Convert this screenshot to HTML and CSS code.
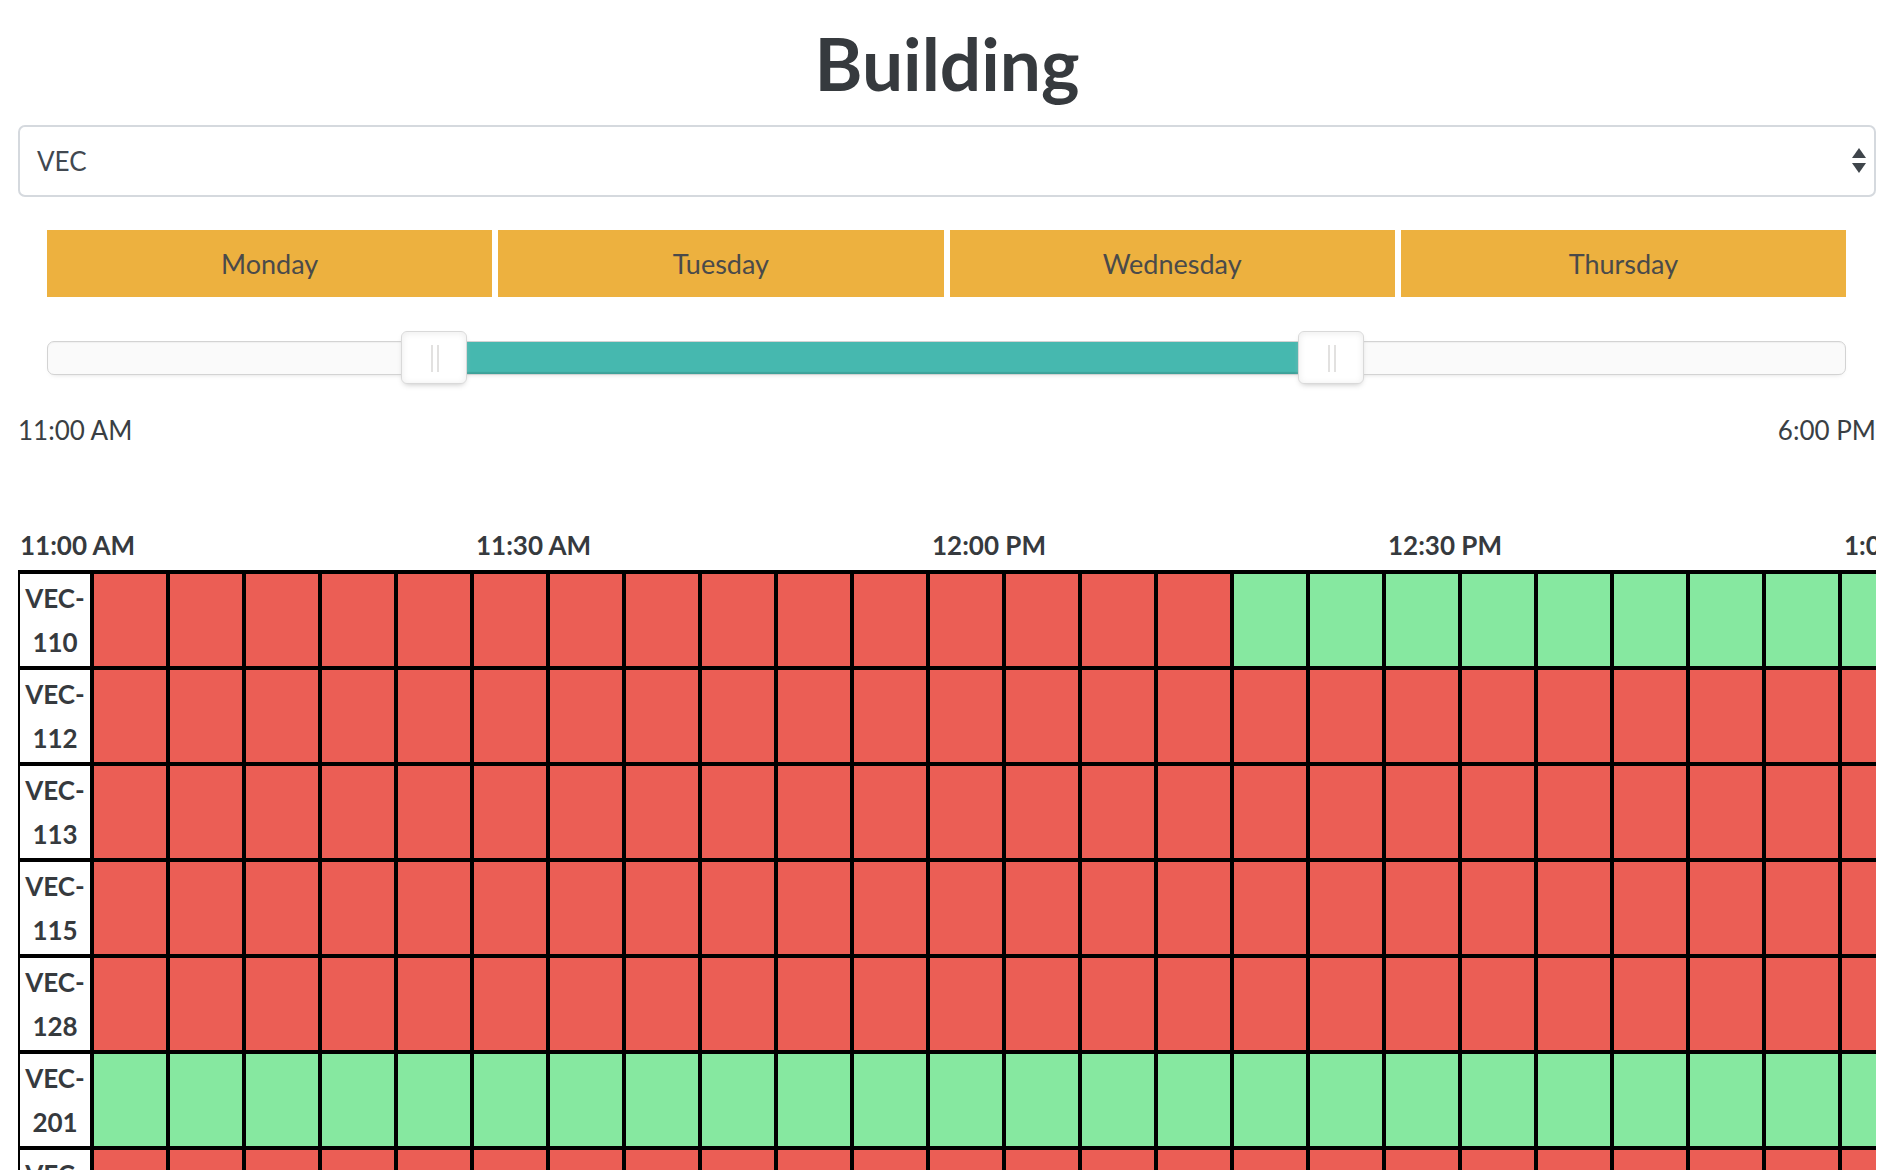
FILE: index.html
```html
<!DOCTYPE html>
<html lang="en">
<head>
<meta charset="utf-8">
<title>Building</title>
<link rel="stylesheet" href="styles.css">
</head>
<body>
<div class="page">
  <h1 class="title">Building</h1>

  <div class="select">
    <span class="select-value">VEC</span>
    <svg class="select-arrows" width="14" height="26" viewBox="0 0 14 26" aria-hidden="true">
      <polygon points="7,0 14,10 0,10" fill="#3f454b"/>
      <polygon points="0,15 14,15 7,25" fill="#3f454b"/>
    </svg>
  </div>

  <div class="controls">
    <div class="days">
      <div class="day">Monday</div>
      <div class="day">Tuesday</div>
      <div class="day">Wednesday</div>
      <div class="day">Thursday</div>
    </div>

    <div class="slider">
      <div class="connect"></div>
      <div class="handle handle-lower"></div>
      <div class="handle handle-upper"></div>
    </div>
  </div>

  <div class="range-labels">
    <span>11:00 AM</span>
    <span>6:00 PM</span>
  </div>

  <div class="schedule">
    <div class="times">
      <div class="time">11:00 AM</div>
      <div class="time">11:30 AM</div>
      <div class="time">12:00 PM</div>
      <div class="time">12:30 PM</div>
      <div class="time">1:00 PM</div>
    </div>

    <div class="grid">
      <div class="room">VEC-<br>110</div>
      <span class="r"></span><span class="r"></span><span class="r"></span><span class="r"></span><span class="r"></span><span class="r"></span><span class="r"></span><span class="r"></span><span class="r"></span><span class="r"></span><span class="r"></span><span class="r"></span><span class="r"></span><span class="r"></span><span class="r"></span><span class="g"></span><span class="g"></span><span class="g"></span><span class="g"></span><span class="g"></span><span class="g"></span><span class="g"></span><span class="g"></span><span class="g"></span>

      <div class="room">VEC-<br>112</div>
      <span class="r"></span><span class="r"></span><span class="r"></span><span class="r"></span><span class="r"></span><span class="r"></span><span class="r"></span><span class="r"></span><span class="r"></span><span class="r"></span><span class="r"></span><span class="r"></span><span class="r"></span><span class="r"></span><span class="r"></span><span class="r"></span><span class="r"></span><span class="r"></span><span class="r"></span><span class="r"></span><span class="r"></span><span class="r"></span><span class="r"></span><span class="r"></span>

      <div class="room">VEC-<br>113</div>
      <span class="r"></span><span class="r"></span><span class="r"></span><span class="r"></span><span class="r"></span><span class="r"></span><span class="r"></span><span class="r"></span><span class="r"></span><span class="r"></span><span class="r"></span><span class="r"></span><span class="r"></span><span class="r"></span><span class="r"></span><span class="r"></span><span class="r"></span><span class="r"></span><span class="r"></span><span class="r"></span><span class="r"></span><span class="r"></span><span class="r"></span><span class="r"></span>

      <div class="room">VEC-<br>115</div>
      <span class="r"></span><span class="r"></span><span class="r"></span><span class="r"></span><span class="r"></span><span class="r"></span><span class="r"></span><span class="r"></span><span class="r"></span><span class="r"></span><span class="r"></span><span class="r"></span><span class="r"></span><span class="r"></span><span class="r"></span><span class="r"></span><span class="r"></span><span class="r"></span><span class="r"></span><span class="r"></span><span class="r"></span><span class="r"></span><span class="r"></span><span class="r"></span>

      <div class="room">VEC-<br>128</div>
      <span class="r"></span><span class="r"></span><span class="r"></span><span class="r"></span><span class="r"></span><span class="r"></span><span class="r"></span><span class="r"></span><span class="r"></span><span class="r"></span><span class="r"></span><span class="r"></span><span class="r"></span><span class="r"></span><span class="r"></span><span class="r"></span><span class="r"></span><span class="r"></span><span class="r"></span><span class="r"></span><span class="r"></span><span class="r"></span><span class="r"></span><span class="r"></span>

      <div class="room">VEC-<br>201</div>
      <span class="g"></span><span class="g"></span><span class="g"></span><span class="g"></span><span class="g"></span><span class="g"></span><span class="g"></span><span class="g"></span><span class="g"></span><span class="g"></span><span class="g"></span><span class="g"></span><span class="g"></span><span class="g"></span><span class="g"></span><span class="g"></span><span class="g"></span><span class="g"></span><span class="g"></span><span class="g"></span><span class="g"></span><span class="g"></span><span class="g"></span><span class="g"></span>

      <div class="room">VEC-<br>202</div>
      <span class="r"></span><span class="r"></span><span class="r"></span><span class="r"></span><span class="r"></span><span class="r"></span><span class="r"></span><span class="r"></span><span class="r"></span><span class="r"></span><span class="r"></span><span class="r"></span><span class="r"></span><span class="r"></span><span class="r"></span><span class="r"></span><span class="r"></span><span class="r"></span><span class="r"></span><span class="r"></span><span class="r"></span><span class="r"></span><span class="r"></span><span class="r"></span>
    </div>
  </div>
</div>
</body>
</html>
```

FILE: styles.css
```css
html {
  overflow: hidden;
}

body {
  margin: 0;
  background: #ffffff;
  color: #363a3e;
  font-family: Lato, "Open Sans", "Noto Sans", sans-serif;
  font-size: 26px;
}

.page {
  padding: 0 22px 0 18px;
}

.title {
  margin: 0;
  padding-top: 19px;
  font-size: 73px;
  line-height: 88px;
  font-weight: 700;
  text-align: center;
  color: #363a3e;
}

.select {
  margin-top: 18px;
  height: 72px;
  box-sizing: border-box;
  border: 2px solid #d5d9de;
  border-radius: 7px;
  padding: 0 8px 0 17px;
  display: flex;
  align-items: center;
  justify-content: space-between;
}

.select-value {
  font-size: 26px;
  color: #414850;
}

.select-arrows {
  display: block;
}

.controls {
  margin: 33px 30px 0 29px;
}

.days {
  display: flex;
  gap: 6px;
}

.day {
  flex: 1 1 0;
  height: 67px;
  background: #edb13f;
  color: #4a4a4a;
  display: flex;
  align-items: center;
  justify-content: center;
  font-size: 27px;
}

.slider {
  position: relative;
  margin-top: 44px;
  height: 34px;
  box-sizing: border-box;
  border: 1px solid #d3d3d3;
  border-radius: 7px;
  background: #fafafa;
  box-shadow: inset 0 1px 1px #f0f0f0, 0 3px 6px -5px #bbbbbb;
}

.connect {
  position: absolute;
  top: 0;
  bottom: 0;
  left: 21.5%;
  right: 28.6%;
  background: #46b8af;
  box-shadow: inset 0 -2px 1px rgba(0, 0, 0, 0.12);
}

.handle {
  position: absolute;
  top: -11px;
  width: 66px;
  height: 53px;
  box-sizing: border-box;
  border: 1px solid #d9d9d9;
  border-radius: 6px;
  background: #ffffff;
  box-shadow: inset 0 0 1px #ffffff, inset 0 1px 7px #ebebeb, 0 3px 6px -3px #bbbbbb;
}

.handle::before,
.handle::after {
  content: "";
  position: absolute;
  top: 13px;
  width: 2px;
  height: 27px;
  background: #e2e1e0;
}

.handle::before {
  left: 29px;
}

.handle::after {
  left: 35px;
}

.handle-lower {
  left: calc(21.5% - 33px);
}

.handle-upper {
  left: calc(71.4% - 33px);
}

.range-labels {
  margin-top: 40px;
  display: flex;
  justify-content: space-between;
  line-height: 31px;
  color: #3a3f44;
}

.schedule {
  margin-top: 84px;
  overflow: hidden;
}

.times {
  display: flex;
  height: 31px;
  margin-bottom: 9px;
  line-height: 31px;
  font-weight: 700;
  white-space: nowrap;
}

.time {
  flex: none;
  width: 456px;
  box-sizing: border-box;
  padding-left: 2px;
}

.grid {
  display: grid;
  grid-template-columns: 70px repeat(24, 72px);
  grid-auto-rows: 92px;
  gap: 4px;
  padding: 4px 4px 4px 2px;
  background: #000000;
  width: max-content;
}

.room {
  background: #ffffff;
  text-align: center;
  font-weight: 700;
  line-height: 44px;
  padding-top: 2px;
  color: #363a3e;
}

.r {
  background: #eb5e55;
}

.g {
  background: #86e8a0;
}
```
